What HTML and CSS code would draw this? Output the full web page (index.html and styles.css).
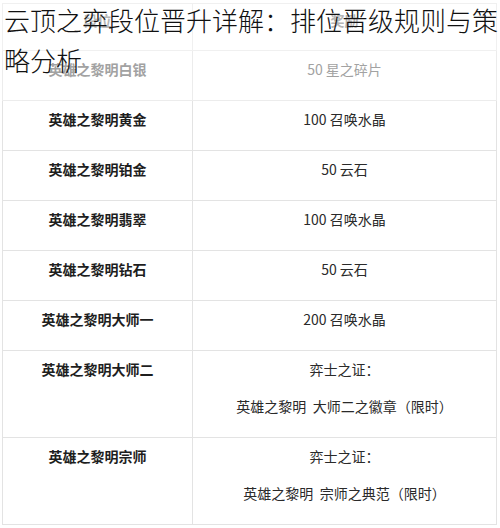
FILE: index.html
```html
<!DOCTYPE html>
<html lang="zh-CN">
<head>
<meta charset="utf-8">
<title>云顶之弈段位晋升详解</title>
<link rel="stylesheet" href="styles.css">
</head>
<body>
<div class="page">
  <table class="rank-table">
    <thead>
      <tr class="head-row">
        <th class="col-rank">段位</th>
        <th class="col-reward">奖励</th>
      </tr>
    </thead>
    <tbody>
      <tr class="faded">
        <td class="rank">英雄之黎明白银</td>
        <td class="reward">50 星之碎片</td>
      </tr>
      <tr>
        <td class="rank">英雄之黎明黄金</td>
        <td class="reward">100 召唤水晶</td>
      </tr>
      <tr>
        <td class="rank">英雄之黎明铂金</td>
        <td class="reward">50 云石</td>
      </tr>
      <tr>
        <td class="rank">英雄之黎明翡翠</td>
        <td class="reward">100 召唤水晶</td>
      </tr>
      <tr>
        <td class="rank">英雄之黎明钻石</td>
        <td class="reward">50 云石</td>
      </tr>
      <tr>
        <td class="rank">英雄之黎明大师一</td>
        <td class="reward">200 召唤水晶</td>
      </tr>
      <tr>
        <td class="rank">英雄之黎明大师二</td>
        <td class="reward">弈士之证：<br>英雄之黎明&nbsp; 大师二之徽章（限时）</td>
      </tr>
      <tr>
        <td class="rank">英雄之黎明宗师</td>
        <td class="reward">弈士之证：<br>英雄之黎明&nbsp; 宗师之典范（限时）</td>
      </tr>
    </tbody>
  </table>
  <h1 class="title">云顶之弈段位晋升详解：排位晋级规则与策略分析</h1>
</div>
</body>
</html>
```
FILE: styles.css
```css
html, body {
  margin: 0;
  padding: 0;
  background: #ffffff;
}

.page {
  position: relative;
  width: 500px;
  padding: 3px 0 0 2px;
  box-sizing: border-box;
  font-family: "Noto Sans CJK SC", "Noto Sans", sans-serif;
}

.rank-table {
  width: 495px;
  border-collapse: collapse;
  table-layout: fixed;
  font-size: 14px;
}

.rank-table th,
.rank-table td {
  border: 1px solid #e3e3e3;
  text-align: center;
  vertical-align: top;
  padding: 0 4px 12px;
  line-height: 37px;
}

.col-rank {
  width: 181px;
}

.head-row th {
  padding: 0 4px 13px;
  line-height: 33px;
  color: #b5b5b5;
  font-weight: 700;
  border-color: #f0f0f0;
}

.rank {
  font-weight: 700;
  color: #1e1e1e;
}

.reward {
  font-weight: 400;
  color: #2a2a2a;
}

.faded .rank,
.faded .reward {
  color: #a2a2a2;
}

.faded td {
  border-color: #ececec;
}

.title {
  position: absolute;
  top: 0;
  left: 4px;
  right: 0;
  margin: 0;
  font-size: 26px;
  line-height: 40px;
  font-weight: 300;
  color: #111111;
}
```
